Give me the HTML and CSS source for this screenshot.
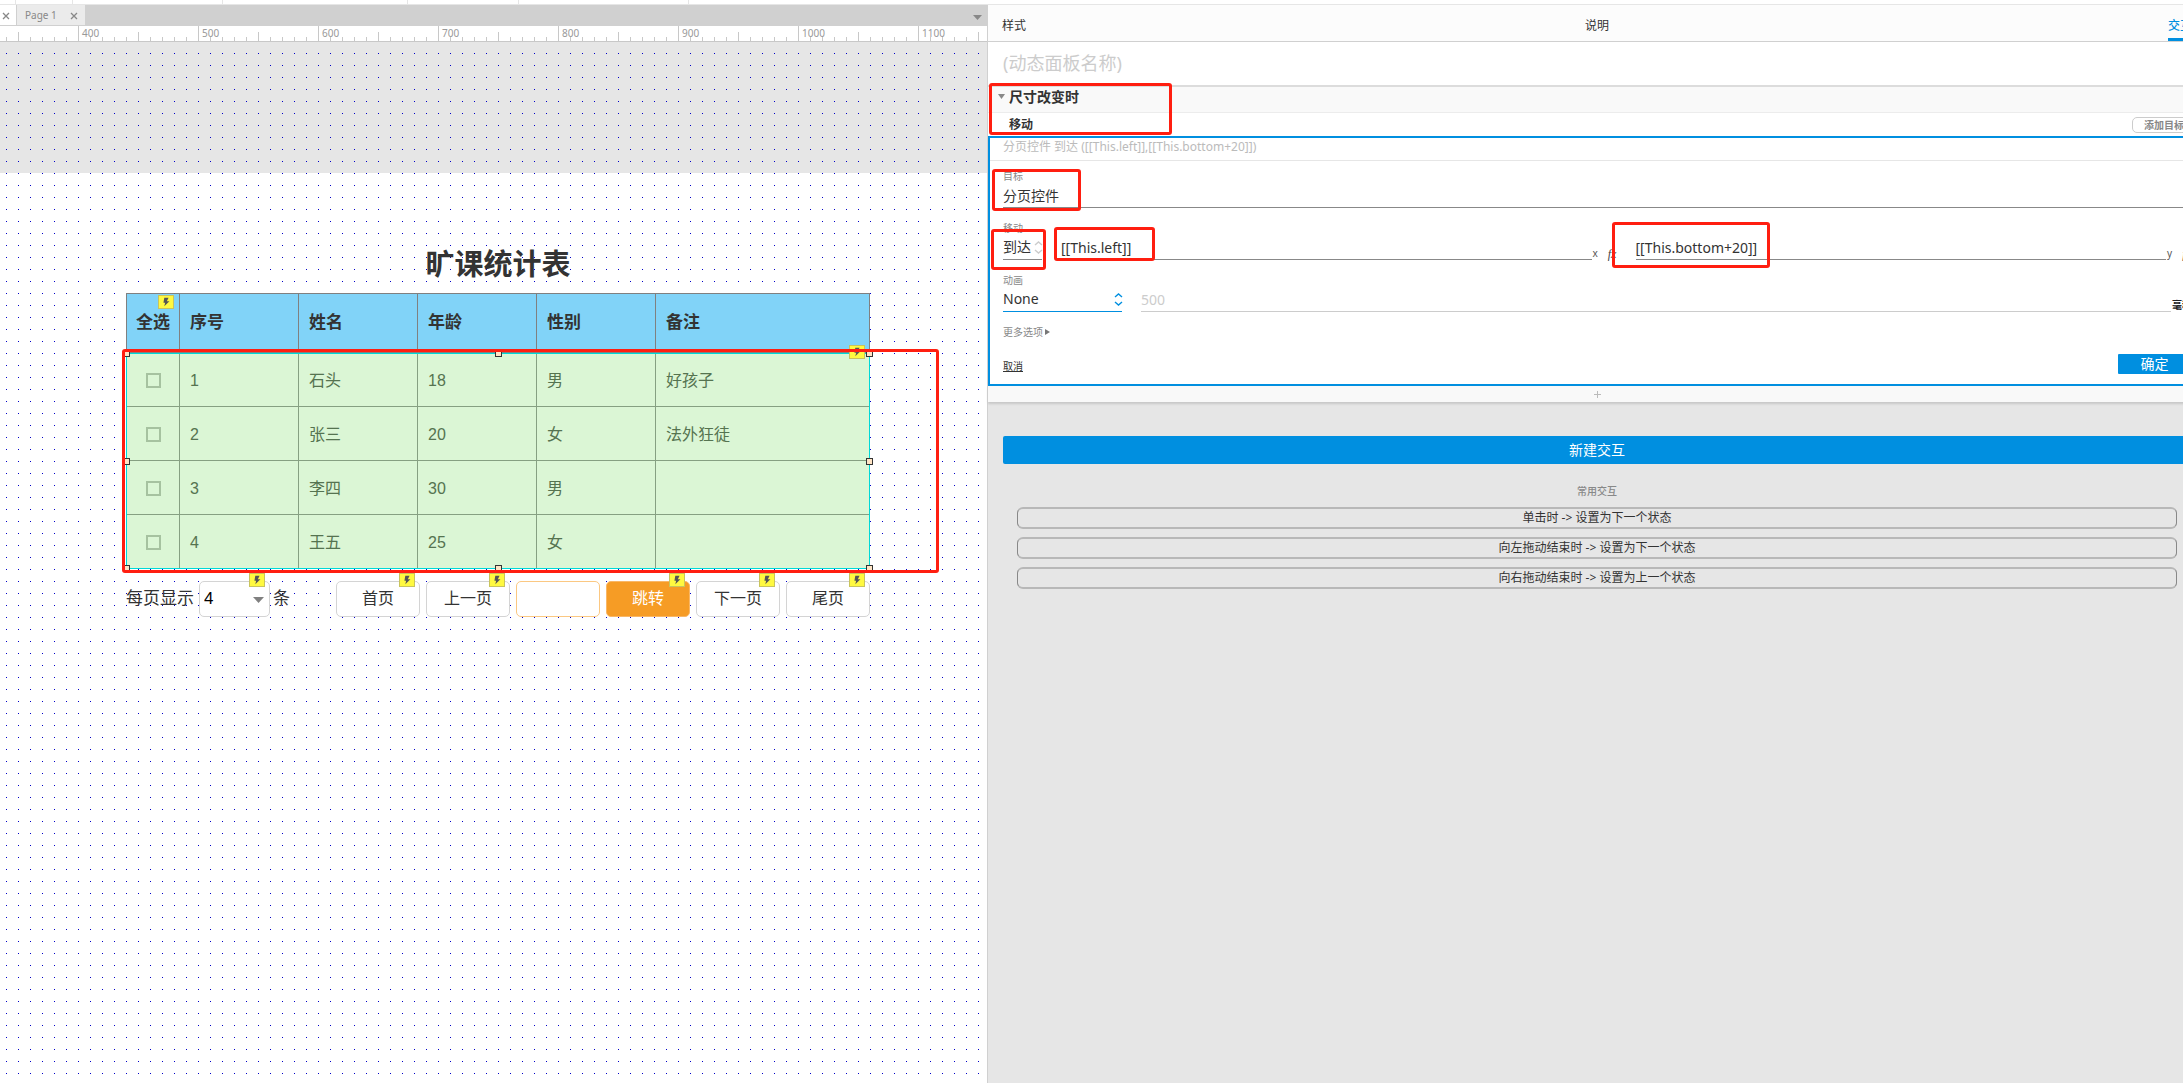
FILE: index.html
```html
<!DOCTYPE html>
<html lang="zh-CN">
<head>
<meta charset="utf-8">
<title>旷课统计表 - Page 1</title>
<link rel="stylesheet" href="styles.css">
</head>
<body>
<svg width="0" height="0" class="defs" aria-hidden="true">
  <symbol id="bolt" viewBox="0 0 16 14"><path d="M6 2h5L9 6h3L6 12l1-4H5z" fill="#555"/></symbol>
  <symbol id="updown" viewBox="0 0 9 13"><path d="M1 4l3.500-3L8 4M1 9l3.500 3L8 9" fill="none" stroke="currentColor" stroke-width="1.400"/></symbol>
  <symbol id="cross" viewBox="0 0 8 8"><path d="M1 1l6 6M7 1L1 7" fill="none" stroke="currentColor" stroke-width="1.300"/></symbol>
</svg>
<div class="toolbar"><i class="t1"></i><i class="t2"></i><i class="t3"></i><i class="t4"></i><i class="t5"></i><i class="t6"></i></div>
<div class="app">
  <main class="workspace">
    <div class="tabbar">
      <div class="tab tab-active"><button aria-label="关闭"><svg width="8" height="8"><use href="#cross"/></svg></button></div>
      <div class="tab"><span>Page 1</span><button aria-label="关闭"><svg width="8" height="8"><use href="#cross"/></svg></button></div>
      <button class="tab-list" aria-label="页面列表"><svg width="9" height="5"><path d="M0 0h9L4.500 5z" fill="#888"/></svg></button>
    </div>
    <div class="ruler">
      <span>400</span><span>500</span><span>600</span><span>700</span><span>800</span><span>900</span><span>1000</span><span>1100</span>
    </div>
    <div class="canvas">
      <section class="report">
        <h1>旷课统计表</h1>
        <div class="table-wrap">
          <table>
            <colgroup><col class="c-check"><col class="c-mid"><col class="c-mid"><col class="c-mid"><col class="c-mid"><col></colgroup>
            <thead><tr><th>全选<svg class="bolt"><use href="#bolt"/></svg></th><th>序号</th><th>姓名</th><th>年龄</th><th>性别</th><th>备注</th></tr></thead>
            <tbody>
              <tr><td><input type="checkbox" aria-label="选择 1"></td><td>1</td><td>石头</td><td>18</td><td>男</td><td>好孩子</td></tr>
              <tr><td><input type="checkbox" aria-label="选择 2"></td><td>2</td><td>张三</td><td>20</td><td>女</td><td>法外狂徒</td></tr>
              <tr><td><input type="checkbox" aria-label="选择 3"></td><td>3</td><td>李四</td><td>30</td><td>男</td><td></td></tr>
              <tr><td><input type="checkbox" aria-label="选择 4"></td><td>4</td><td>王五</td><td>25</td><td>女</td><td></td></tr>
            </tbody>
          </table>
          <div class="selection">
            <svg class="bolt"><use href="#bolt"/></svg>
            <i class="h-top h-left"></i><i class="h-top h-center"></i><i class="h-top h-right"></i>
            <i class="h-middle h-left"></i><i class="h-middle h-right"></i>
            <i class="h-bottom h-left"></i><i class="h-bottom h-center"></i><i class="h-bottom h-right"></i>
            <div class="mark mark-table"></div>
          </div>
        </div>
        <div class="pager">
          <label for="size">每页显示</label>
          <div class="slot slot-size"><select id="size"><option>4</option></select><svg class="caret" width="11" height="6"><path d="M0 0h11L5.500 6z" fill="#808080"/></svg><svg class="bolt"><use href="#bolt"/></svg></div>
          <span class="unit-rows">条</span>
          <div class="slot first"><button>首页</button><svg class="bolt"><use href="#bolt"/></svg></div>
          <div class="slot"><button>上一页</button><svg class="bolt"><use href="#bolt"/></svg></div>
          <div class="slot"><input type="text" aria-label="页码"></div>
          <div class="slot"><button class="go">跳转</button><svg class="bolt"><use href="#bolt"/></svg></div>
          <div class="slot"><button>下一页</button><svg class="bolt"><use href="#bolt"/></svg></div>
          <div class="slot"><button>尾页</button><svg class="bolt"><use href="#bolt"/></svg></div>
        </div>
      </section>
    </div>
  </main>
  <aside class="panel">
    <nav class="panel-tabs"><button>样式</button><button>说明</button><button class="current">交互</button></nav>
    <div class="name"><input type="text" placeholder="(动态面板名称)" aria-label="动态面板名称"></div>
    <div class="event">
      <div class="event-head"><svg width="7" height="5"><path d="M0 0h7L3.500 5z" fill="#888"/></svg><span>尺寸改变时</span></div>
      <div class="action-head"><span>移动</span><button>添加目标</button></div>
      <div class="mark mark-event"></div>
    </div>
    <div class="editor">
      <p class="summary">分页控件 到达 ([[This.left]],[[This.bottom+20]])</p>
      <form>
        <div class="field">
          <label for="target">目标</label>
          <input id="target" type="text" value="分页控件">
          <div class="mark mark-target"></div>
        </div>
        <div class="field">
          <label for="move">移动</label>
          <div class="row">
            <div class="pick pick-move"><select id="move"><option>到达</option></select><svg width="9" height="13"><use href="#updown"/></svg><div class="mark mark-move"></div></div>
            <div class="coord"><input id="x" type="text" value="[[This.left]]"><label for="x">x</label><button type="button">fx</button><div class="mark mark-x"></div></div>
            <div class="coord"><input id="y" type="text" value="[[This.bottom+20]]"><label for="y">y</label><button type="button">fx</button><div class="mark mark-y"></div></div>
          </div>
        </div>
        <div class="field">
          <label for="anim">动画</label>
          <div class="row">
            <div class="pick pick-anim"><select id="anim"><option>None</option></select><svg width="9" height="13"><use href="#updown"/></svg></div>
            <div class="duration"><input id="ms" type="text" placeholder="500"><label for="ms">毫秒</label></div>
          </div>
        </div>
        <button type="button" class="more">更多选项<svg width="5" height="6"><path d="M0 0l5 3-5 3z" fill="#777"/></svg></button>
        <div class="buttons"><a href="#">取消</a><button type="button">确定</button></div>
      </form>
    </div>
    <button class="add" aria-label="添加动作"><svg width="7" height="7"><path d="M3.500 0v7M0 3.500h7" stroke="#bbb"/></svg></button>
    <section class="common">
      <button class="new">新建交互</button>
      <h2>常用交互</h2>
      <div class="presets"><button>单击时 -&gt; 设置为下一个状态</button><button>向左拖动结束时 -&gt; 设置为下一个状态</button><button>向右拖动结束时 -&gt; 设置为上一个状态</button></div>
    </section>
  </aside>
</div>
</body>
</html>
```

FILE: styles.css
```css
* { box-sizing: border-box; }
html { overflow: hidden; }
body {
  margin: 0;
  min-height: 100vh;
  display: flex;
  flex-direction: column;
  overflow: hidden;
  background: #fff;
  color: #333;
  font: 12px/14px "Noto Sans", "Noto Sans CJK SC", sans-serif;
}
button, input, select { font: inherit; color: inherit; margin: 0; padding: 0; border: 0; background: none; border-radius: 0; }
button, select { cursor: pointer; }
input, select { appearance: none; outline: 0; min-width: 0; }
svg { display: block; }
.defs { position: absolute; }

/* top tool strip */
.toolbar { display: flex; height: 5px; border-bottom: 1px solid #e6e6e6; }
.toolbar i { height: 4px; border-right: 1px solid #e6e6e6; }
.t1 { width: 16px; }
.t2 { width: 57px; }
.t3 { width: 150px; }
.t4 { width: 185px; }
.t5 { width: 111px; }
.t6 { width: 170px; }

/* the inspector runs a little past the right edge of the window */
.app { flex: 1; width: calc(100% + 23px); display: grid; grid-template-columns: 988fr 1218fr; }

.workspace { display: flex; flex-direction: column; min-width: 0; border-right: 1px solid #d0d0d0; }
.tabbar { display: flex; height: 21px; background: #d0d0d0; padding-bottom: 1px; }
.tab { display: flex; align-items: center; justify-content: space-between; width: 68px; padding: 0 7px 0 8px; background: #ebebeb; color: #888; font-size: 10px; }
.tab-active { width: 16px; margin-right: 1px; padding: 0 6px 0 2px; background: #fff; }
.tab button { padding-top: 2px; }
.tab-list { margin: 4px 5px 0 auto; }
.ruler {
  display: flex;
  height: 16px;
  padding-left: 82px;
  border-bottom: 1px solid #c8c8c8;
  overflow: hidden;
  color: #999;
  font-size: 10px;
  background:
    linear-gradient(90deg, #c8c8c8 1px, transparent 1px) 78px 0 / 120px 15px repeat-x,
    linear-gradient(90deg, #c8c8c8 1px, transparent 1px) 18px 6px / 120px 9px repeat-x,
    linear-gradient(90deg, #c8c8c8 1px, transparent 1px) 6px 11px / 12px 4px repeat-x;
}
.ruler span { flex: 0 0 120px; }
.canvas {
  flex: 1;
  position: relative;
  background:
    conic-gradient(from 270deg at 1px 1px, #0000c8 90deg, transparent 0) 6px 11px / 12px 12px,
    linear-gradient(#e6e6e6, #e6e6e6) 0 0 / 100% 131px no-repeat;
}
.report { position: absolute; left: 126px; top: 190px; width: 744px; font-family: "Liberation Sans", "Noto Sans CJK SC", sans-serif; font-size: 16px; }
.report h1 { margin: 0; padding-top: 6px; font-size: 29px; line-height: 55px; text-align: center; }

.table-wrap { position: relative; }
table { width: 100%; table-layout: fixed; border-collapse: collapse; line-height: 20px; }
.c-check { width: 53px; }
.c-mid { width: 119px; }
th, td { padding: 0 0 0 10px; text-align: left; border: 1px solid #808080; }
th { position: relative; height: 59px; font-size: 17px; background: #81d3f8; }
td { height: 54px; padding-top: 2px; background: #dbf6d5; border-color: #86a082; color: #557350; }
th:first-child { padding: 0; text-align: center; }
td:first-child { padding: 2px 0 0; }
td input { display: block; width: 15px; height: 15px; margin: 0 auto; border: 2px solid #a6c2a0; }
.bolt { position: absolute; right: 5px; top: -8px; width: 16px; height: 14px; background: #fff940; border: 1px solid #c9c45c; }
th .bolt { top: 1px; }

.selection { position: absolute; left: 0; top: 60px; right: 0; bottom: 0; border: 1px solid #00d8d8; }
.selection i { position: absolute; width: 7px; height: 7px; border: 1px solid #333; background: #ffe4c4; }
.h-top { top: -4px; }
.h-middle { top: calc(50% - 3px); }
.h-bottom { bottom: -4px; }
.h-left { left: -4px; }
.h-center { left: calc(50% - 3px); }
.h-right { right: -4px; }
.selection .bolt { right: 4px; top: -9px; }

.pager { display: flex; align-items: center; gap: 6px; margin-top: 12px; line-height: 34px; }
.pager label, .unit-rows { font-size: 17px; }
.pager label { width: 67px; min-width: 0; white-space: nowrap; flex: none; }
.slot { position: relative; flex: none; width: 84px; height: 36px; background: #fff; border-radius: 5px; }
.slot button, .slot input, .slot select { display: block; width: 100%; height: 100%; border: 1px solid #d4d4d4; border-radius: 5px; }
.slot input { border-color: #fbc882; }
.slot .go { background: #f69c25; border-color: #f9b766; color: #fff; }
.slot-size { width: 71px; }
.slot select { padding-left: 4px; font-size: 17px; color: #000; }
.caret { position: absolute; right: 6px; top: 16px; pointer-events: none; }
.unit-rows { margin-left: -3px; }
.first { margin-left: auto; }

/* red call-out frames */
.mark { position: absolute; border: 3px solid #ff1e10; border-radius: 3px; pointer-events: none; }
.mark-table { left: -5px; top: -5px; right: -70px; bottom: -5px; }
.mark-event { left: 1px; top: -4px; width: 183px; height: 52px; }
.mark-target { left: -11px; top: 0; width: 89px; height: 42px; }
.mark-move { left: -12px; top: -6px; width: 55px; height: 41px; }
.mark-x { left: -7px; top: -8px; width: 101px; height: 34px; }
.mark-y { left: -24px; top: -13px; width: 158px; height: 46px; }

/* inspector */
.panel { display: flex; flex-direction: column; min-width: 0; background: #e6e6e6; }
.panel-tabs { display: flex; justify-content: space-between; height: 37px; padding: 0 14px; background: #fcfcfc; border-bottom: 1px solid #d0d0d0; }
.panel-tabs button { padding-top: 9px; border-bottom: 3px solid transparent; }
.panel-tabs .current { color: #008fe0; border-color: #008fe0; font-weight: 500; }
.name { height: 45px; padding: 0 15px; background: #fff; border-bottom: 2px solid #dcdcdc; }
.name input { width: 100%; height: 43px; padding-bottom: 1px; font-size: 18px; }
::placeholder { color: #ccc; opacity: 1; }
.event { position: relative; background: #fff; }
.event-head { display: flex; align-items: center; gap: 4px; height: 26px; padding: 0 10px 6px; background: #f9f9f9; border-bottom: 1px solid #ececec; font-size: 14px; font-weight: 700; }
.action-head { display: flex; align-items: center; justify-content: space-between; height: 23px; padding: 0 10px 0 21px; font-weight: 700; }
.action-head button { width: 64px; height: 16px; border: 1px solid #ccc; border-radius: 5px; color: #888; font-size: 10px; line-height: 14px; }

.editor { background: #fff; border: 2px solid #008fe0; }
.summary { margin: 0; padding: 1px 13px 0; height: 23px; line-height: 16px; border-bottom: 1px solid #e6e6e6; color: #bbb; }
.editor form { display: flex; flex-direction: column; gap: 13px; padding: 8px 13px 10px; }
.field { position: relative; display: flex; flex-direction: column; }
.field label, .more { font-size: 10px; color: #888; }
.field input, .field select { height: 25px; font-size: 14px; border-bottom: 1px solid #888; }
.row { display: flex; gap: 19px; }
.pick { position: relative; }
.pick select { display: block; width: 100%; }
.pick svg { position: absolute; right: -1px; top: 6px; color: #ccc; pointer-events: none; }
.pick-move { width: 39px; }
.pick-anim { width: 119px; }
.pick-anim select { border-color: #008fe0; }
.pick-anim svg { color: #008fe0; }
.coord { position: relative; flex: 1; display: flex; }
.coord input { flex: 1; }
.coord label { width: 16px; padding: 11px 0 0 1px; color: #555; }
.coord button { width: 9px; padding-top: 12px; font: italic 12px/12px "Liberation Serif", serif; color: #444; }
.duration { flex: 1; display: flex; }
.duration input { flex: 1; border-color: #ccc; }
.duration label { width: 20px; padding: 11px 0 0 1px; color: #222; font-weight: 700; white-space: nowrap; }
.more { display: flex; align-items: center; gap: 2px; height: 16px; padding-bottom: 2px; }
.buttons { display: flex; align-items: center; justify-content: space-between; }
.buttons a { color: #333; font-size: 10px; padding-top: 3px; }
.buttons button { width: 73px; height: 20px; border-radius: 1px; background: #008fe0; color: #fff; font-size: 14px; }
.add { display: flex; align-items: center; justify-content: center; height: 16px; background: #f9f9f9; box-shadow: 0 2px 2px #c8c8c8; }
.common { padding: 34px 15px 0; }
.new { display: block; width: 100%; height: 28px; border-radius: 2px; background: #008fe0; color: #fff; font-size: 14px; }
.common h2 { margin: 20px 0 9px; font-size: 10px; font-weight: 500; line-height: 14px; text-align: center; color: #888; }
.presets { display: grid; gap: 8px; padding: 0 14px; }
.presets button { height: 22px; line-height: 16px; border: 1px solid #999; border-width: 2px 1px; border-color: #b8b8b8 #888; border-radius: 6px; }
```
